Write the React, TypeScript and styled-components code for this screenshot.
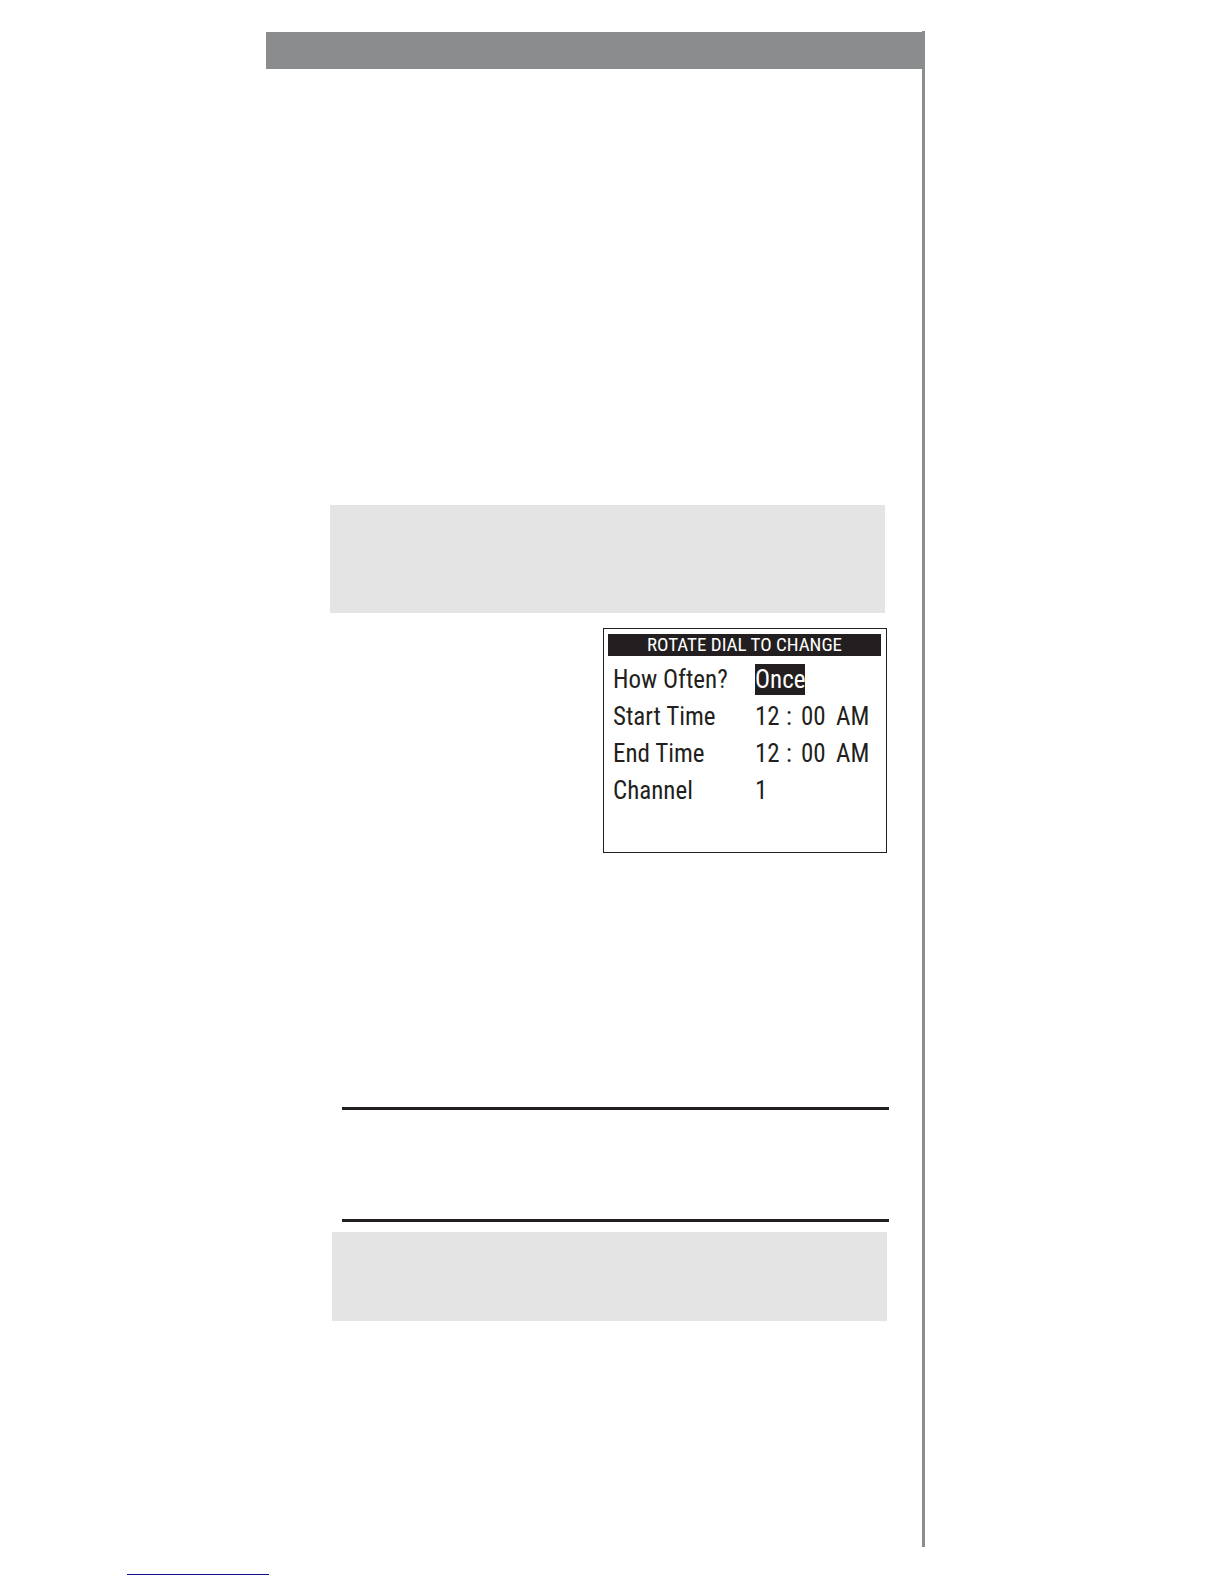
import React from "react";
import styled, { createGlobalStyle } from "styled-components";

const GlobalStyle = createGlobalStyle`
  body {
    margin: 0;
    background: #fff;
    color: #231f20;
    font-family: "Roboto Condensed", "Liberation Sans Narrow", "Liberation Sans", sans-serif;
  }
`;

const Page = styled.div`
  display: grid;
  grid-template-columns: 266fr 659fr 299fr;
  padding-top: 31px;
`;

const Sheet = styled.main`
  grid-column: 2;
  display: flex;
  flex-direction: column;
  box-sizing: border-box;
  padding: 1px 0 226px;
  border-right: 3px solid #8a8c8e;
`;

const Banner = styled.header`
  height: 37px;
  background: #8a8c8e;
`;

const Note = styled.aside<{ $height: number }>`
  height: ${(p) => p.$height}px;
  background: #e4e4e4;
`;

const Opening = styled.section`
  padding: 436px 37px 0 64px;
`;

const Closing = styled.section`
  padding: 10px 35px 0 66px;
`;

const Figure = styled.figure`
  display: flex;
  justify-content: flex-end;
  margin: 0;
  padding: 15px 35px 0 0;
`;

const Screen = styled.div`
  box-sizing: border-box;
  width: 284px;
  padding: 5px 5px 43px 4px;
  border: 1px solid #231f20;
`;

const ScreenTitle = styled.h1`
  margin: 0 0 5px;
  background: #231f20;
  color: #fff;
  font-size: 19px;
  font-weight: 400;
  line-height: 22px;
  text-align: center;
`;

const Settings = styled.dl`
  margin: 0;
  padding-left: 5px;
`;

const Setting = styled.div`
  display: grid;
  grid-template-columns: 142px 1fr;
  align-items: center;
  height: 37px;
  font-size: 25px;
  line-height: 31px;
  white-space: nowrap;
`;

const Label = styled.dt``;

const Value = styled.dd`
  margin: 0;
`;

const Selected = styled.mark`
  display: block;
  width: fit-content;
  background: #231f20;
  color: #fff;
`;

const Clock = styled.time`
  display: grid;
  grid-template-columns: 31px 15px 35px auto;
  justify-content: start;
`;

const Ruled = styled.section`
  height: 109px;
  margin: 254px 33px 0 76px;
  border: solid #231f20;
  border-width: 3px 0;
`;

const FootRule = styled.hr`
  width: 142px;
  height: 1px;
  margin: 27px 0 8px 127px;
  border: 0;
  background: #10108a;
`;

const Midnight = () => (
  <Clock dateTime="00:00">
    <span>12</span>
    <span>:</span>
    <span>00</span>
    <span>AM</span>
  </Clock>
);

const settings: { label: string; value: React.ReactNode }[] = [
  { label: "How Often?", value: <Selected>Once</Selected> },
  { label: "Start Time", value: <Midnight /> },
  { label: "End Time", value: <Midnight /> },
  { label: "Channel", value: "1" },
];

export default function App() {
  return (
    <>
      <GlobalStyle />
      <Page>
        <Sheet>
          <Banner />
          <Opening>
            <Note $height={108} />
          </Opening>
          <Figure>
            <Screen>
              <ScreenTitle>ROTATE DIAL TO CHANGE</ScreenTitle>
              <Settings>
                {settings.map(({ label, value }) => (
                  <Setting key={label}>
                    <Label>{label}</Label>
                    <Value>{value}</Value>
                  </Setting>
                ))}
              </Settings>
            </Screen>
          </Figure>
          <Ruled />
          <Closing>
            <Note $height={89} />
          </Closing>
        </Sheet>
      </Page>
      <FootRule />
    </>
  );
}
